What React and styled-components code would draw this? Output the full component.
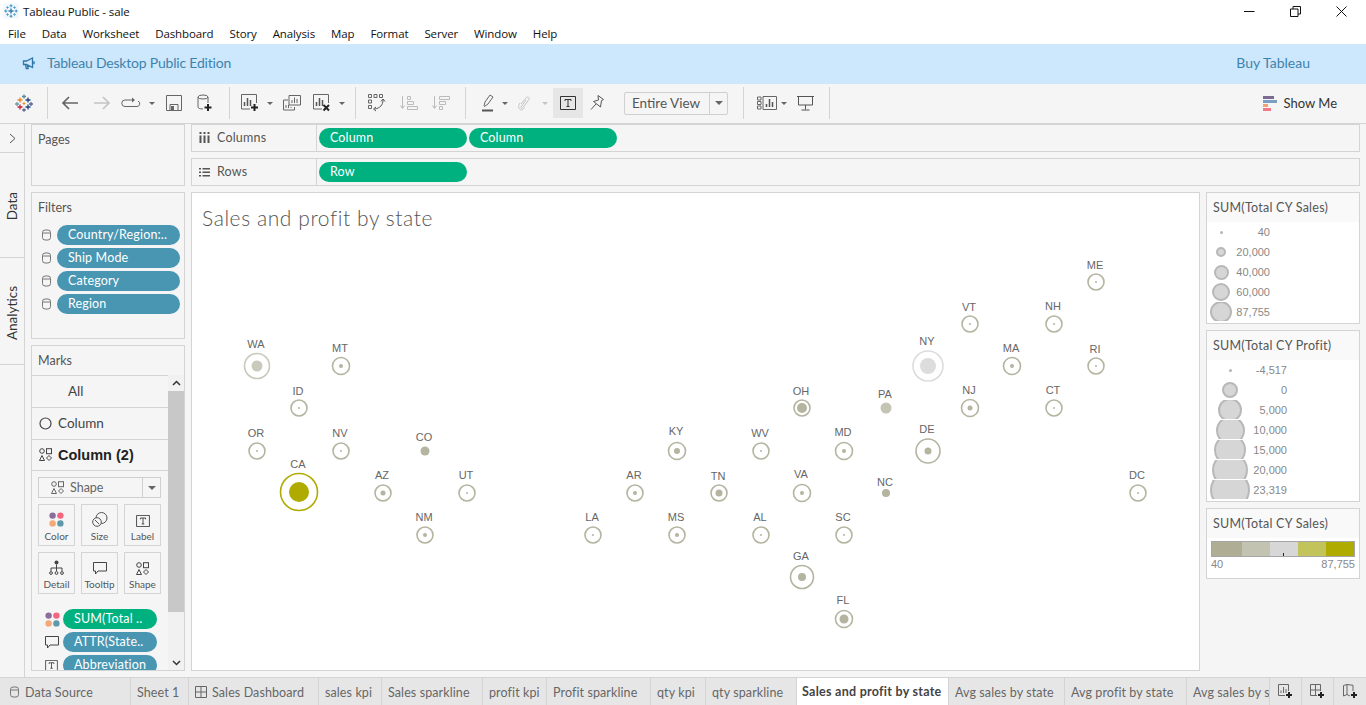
import React from 'react'
import styled, { createGlobalStyle } from 'styled-components'

const GlobalStyle = createGlobalStyle`
  html, body {
    margin: 0;
    padding: 0;
    background: #f5f5f5;
    overflow: hidden;
  }
  * { box-sizing: border-box; }
  svg { flex-shrink: 0; display: block; }
`

const UI = `"Open Sans", "Noto Sans", sans-serif`
const BOOK = `Lato, "Open Sans", sans-serif`
const ARIAL = `"Liberation Sans", Arial, sans-serif`

const Page = styled.div`
  width: 1366px;
  height: 705px;
  display: flex;
  flex-direction: column;
  overflow: hidden;
  font-family: ${BOOK};
  color: #333;
`

const TitleBar = styled.div`
  height: 22px;
  background: #fff;
  display: flex;
  align-items: center;
  padding-left: 3px;
  font: 11.500px ${UI};
  letter-spacing: -0.1px;
  color: #111;
`
const TitleText = styled.span`
  margin-left: 4px;
`
const WindowBtns = styled.div`
  margin-left: auto;
  display: flex;
  align-items: center;
  margin-right: 2px;
`
const WindowBtn = styled.div`
  width: 46px;
  height: 22px;
  display: flex;
  align-items: center;
  justify-content: center;
`
const MenuBar = styled.div`
  height: 22px;
  background: #fff;
  display: flex;
  align-items: center;
  padding-left: 8px;
  gap: 16px;
  font: 11.500px ${UI};
  letter-spacing: -0.12px;
  color: #111;
`
const Banner = styled.div`
  height: 40px;
  background: #cde7fd;
  display: flex;
  align-items: center;
  padding: 0 56px 3px 22px;
  color: #3d83ac;
  font-size: 14px;
`
const BannerText = styled.span`
  margin-left: 11px;
  letter-spacing: -0.2px;
`
const BuyLink = styled.span`
  margin-left: auto;
`

const Toolbar = styled.div`
  height: 40px;
  background: #f5f5f5;
  border-bottom: 1px solid #d4d4d4;
  display: flex;
  align-items: stretch;
`
const ToolGroup = styled.div`
  width: ${p => p.$w}px;
  padding-left: ${p => p.$pad || 0}px;
  margin: 3px 0 4px;
  border-right: 1px solid #d4d4d4;
  display: flex;
  align-items: center;
  flex-shrink: 0;
`
const Tool = styled.div`
  width: ${p => p.$w}px;
  height: 30px;
  flex-shrink: 0;
  display: flex;
  align-items: center;
  justify-content: center;
  margin-left: ${p => p.$ml || 0}px;
  background: ${p => (p.$on ? '#e6e6e6' : 'transparent')};
`
const Caret = styled.span`
  width: 0;
  height: 0;
  border-left: 3px solid transparent;
  border-right: 3px solid transparent;
  border-top: 3px solid ${p => p.$color || '#666'};
`
const FitSelect = styled.div`
  width: 104px;
  height: 23px;
  margin-left: 13px;
  border: 1px solid #cfcfcf;
  border-radius: 2px;
  display: flex;
  align-items: center;
  font: 13.500px ${BOOK};
  color: #555;
  padding-left: 7px;
`
const SelectArrow = styled.div`
  margin-left: auto;
  width: 18px;
  height: 100%;
  border-left: 1px solid #cfcfcf;
  display: flex;
  align-items: center;
  justify-content: center;
  ${Caret} {
    border-left-width: 4px;
    border-right-width: 4px;
    border-top-width: 4px;
  }
`
const ShowMe = styled.div`
  margin-left: auto;
  padding: 0 29px 1px 0;
  display: flex;
  align-items: center;
  gap: 6px;
  font: 13px ${BOOK};
  color: #333;
`

const Main = styled.div`
  height: 553px;
  display: flex;
`
const Rail = styled.div`
  width: 25px;
  border-right: 1px solid #d4d4d4;
  display: flex;
  flex-direction: column;
  flex-shrink: 0;
`
const RailChevron = styled.div`
  height: 29px;
  border-bottom: 1px solid #d4d4d4;
  display: flex;
  align-items: center;
  justify-content: center;
`
const RailTab = styled.div`
  height: ${p => p.$h}px;
  border-bottom: 1px solid #d4d4d4;
  display: flex;
  justify-content: center;
  align-items: flex-start;
  padding-top: ${p => p.$top}px;
  span {
    writing-mode: vertical-rl;
    transform: rotate(180deg);
    font: 13.500px ${BOOK};
    color: #333;
  }
`
const SideColumn = styled.div`
  width: 154px;
  margin-left: 6px;
  display: flex;
  flex-direction: column;
  gap: 6px;
  flex-shrink: 0;
`
const Card = styled.div`
  height: ${p => p.$h}px;
  border: 1px solid #d4d4d4;
  flex-shrink: 0;
  overflow: hidden;
  position: relative;
`
const CardTitle = styled.div`
  font: 12.500px ${BOOK};
  color: #555;
  padding: 7px 6px 0;
  height: 29px;
`
const FilterList = styled.div`
  display: flex;
  flex-direction: column;
  gap: 3px;
  padding: 3px 4px 0 10px;
`
const FilterRow = styled.div`
  display: flex;
  align-items: center;
  gap: 6px;
`
const Pill = styled.div`
  height: 20px;
  width: ${p => p.$w}px;
  border-radius: 10px;
  background: ${p => (p.$green ? '#00b180' : '#4996b2')};
  color: #fff;
  font: 12.500px/20px ${BOOK};
  letter-spacing: 0.15px;
  padding-left: ${p => p.$pad || 11}px;
  white-space: nowrap;
  overflow: hidden;
  flex-shrink: 0;
`
const MarksBody = styled.div`
  display: flex;
  height: 296px;
`
const MarksScroll = styled.div`
  width: 136px;
  overflow: hidden;
`
const MarkRow = styled.div`
  height: 32px;
  border-top: 1px solid #d4d4d4;
  display: flex;
  align-items: center;
  gap: 6px;
  padding: 0 0 1px ${p => p.$pad || 7}px;
  font: 13.500px ${BOOK};
  color: #444;
`
const MarkRowBold = styled(MarkRow)`
  font: 700 14.500px ${ARIAL};
  color: #222;
  border-bottom: 1px solid #d4d4d4;
`
const MarkTypeSelect = styled.div`
  width: 123px;
  height: 21px;
  margin: 6px 0 0 6px;
  border: 1px solid #cfcfcf;
  display: flex;
  align-items: center;
  padding-left: 12px;
  gap: 6px;
  font: 12.500px ${BOOK};
  color: #666;
`
const MarkButtons = styled.div`
  display: grid;
  grid-template-columns: repeat(3, 37px);
  grid-auto-rows: 42px;
  gap: 6px;
  margin: 6px 0 0 6px;
`
const MarkButton = styled.div`
  border: 1px solid #d4d4d4;
  display: flex;
  flex-direction: column;
  align-items: center;
  justify-content: flex-end;
  padding-bottom: 2px;
  font: 10px/13px ${BOOK};
  color: #555;
  svg { margin-bottom: 3px; }
`
const MarkPills = styled.div`
  display: flex;
  flex-direction: column;
  gap: 3px;
  margin: 15px 0 0 13px;
`
const MarkPillRow = styled.div`
  display: flex;
  align-items: center;
  gap: 3px;
`
const MarkPillIcon = styled.div`
  width: 15px;
  display: flex;
  justify-content: flex-start;
`
const Scrollbar = styled.div`
  width: 16px;
  display: flex;
  flex-direction: column;
  align-items: center;
  background: #f1f1f1;
`
const ScrollArrow = styled.div`
  height: 16px;
  width: 100%;
  display: flex;
  align-items: center;
  justify-content: center;
`
const ScrollThumb = styled.div`
  width: 100%;
  height: 221px;
  background: #c8c8c8;
`
const ScrollGap = styled.div`
  flex: 1;
`

const Centre = styled.div`
  width: 1169px;
  margin-left: 6px;
  display: flex;
  flex-direction: column;
  gap: 6px;
  flex-shrink: 0;
`
const Shelf = styled.div`
  height: 28px;
  border: 1px solid #d4d4d4;
  display: flex;
  align-items: center;
  flex-shrink: 0;
`
const ShelfLabel = styled.div`
  width: 125px;
  height: 100%;
  padding: 0 0 1px 7px;
  border-right: 1px solid #d4d4d4;
  display: flex;
  align-items: center;
  gap: 7px;
  font: 12.500px ${BOOK};
  letter-spacing: 0.2px;
  color: #555;
`
const ShelfPills = styled.div`
  display: flex;
  gap: 2px;
  padding-left: 2px;
`
const ViewRow = styled.div`
  display: flex;
  gap: 6px;
`
const View = styled.div`
  width: 1009px;
  height: 479px;
  background: #fff;
  border: 1px solid #d4d4d4;
  position: relative;
`
const ViewTitle = styled.div`
  font: 300 21px ${BOOK};
  color: #555;
  padding: 12px 0 0 10px;
  letter-spacing: 0.58px;
`
const MapChart = styled.svg`
  position: absolute;
  left: 0;
  top: 0;
  width: 1007px;
  height: 477px;
  text {
    font: 11px ${ARIAL};
    fill: #666;
    text-anchor: middle;
  }
`
const Legends = styled.div`
  width: 154px;
  display: flex;
  flex-direction: column;
  gap: 6px;
`
const Legend = styled.div`
  border: 1px solid #d4d4d4;
  background: #fff;
  padding-bottom: 1px;
`
const LegendTitle = styled.div`
  height: 29px;
  background: #f9f9f9;
  padding: 7px 6px 0;
  font: 12.500px ${BOOK};
  letter-spacing: 0.25px;
  color: #555;
  white-space: nowrap;
`
const LegendRow = styled.div`
  height: 20px;
  display: flex;
  align-items: center;
  position: relative;
  overflow: hidden;
  font: 11px ${ARIAL};
  color: #888;
`
const LegendClip = styled.div`
  position: absolute;
  left: 0;
  top: 0;
  width: 60px;
  height: 19px;
  overflow: hidden;
`
const LegendDot = styled.div`
  position: absolute;
  left: ${p => p.$cx - p.$r}px;
  top: ${p => 10 - p.$r}px;
  width: ${p => p.$r * 2}px;
  height: ${p => p.$r * 2}px;
  border-radius: 50%;
  background: ${p => (p.$r > 2 ? '#d6d6d6' : '#b5b5b5')};
  border: ${p => (p.$r > 2 ? '2px solid #b8b8b8' : '0')};
`
const LegendValue = styled.span`
  width: ${p => p.$right}px;
  text-align: right;
  position: relative;
`
const Ramp = styled.div`
  margin: 3px 4px 0;
  height: 16px;
  display: flex;
  border: 1px solid #a6a6a6;
  position: relative;
`
const RampStep = styled.div`
  width: ${p => p.$w}px;
  background: ${p => p.$c};
`
const RampTick = styled.div`
  position: absolute;
  left: 71px;
  bottom: 0;
  width: 1px;
  height: 3px;
  background: #222;
`
const RampLabels = styled.div`
  display: flex;
  justify-content: space-between;
  padding: 1px 4px 0;
  height: 20px;
  font: 11px ${ARIAL};
  color: #888;
`

const TabBar = styled.div`
  height: 28px;
  background: #e6e6e6;
  border-top: 1px solid #d4d4d4;
  display: flex;
  overflow: hidden;
`
const Tab = styled.div`
  width: ${p => p.$w}px;
  flex-shrink: 0;
  border-right: 1px solid #d4d4d4;
  display: flex;
  align-items: center;
  gap: ${p => p.$gap || 5}px;
  padding: ${p => (p.$active ? 0 : '1px')} 0 0 ${p => p.$pad || 6}px;
  font: ${p => (p.$active ? 700 : 400)} 12.500px ${BOOK};
  letter-spacing: ${p => (p.$active ? '0.27px' : '0.1px')};
  color: ${p => (p.$active ? '#444' : '#666')};
  background: ${p => (p.$active ? '#fff' : 'transparent')};
  white-space: nowrap;
  overflow: hidden;
`
const TabAction = styled.div`
  width: 32px;
  flex-shrink: 0;
  border-right: 1px solid #d4d4d4;
  display: flex;
  align-items: center;
  justify-content: center;
  &:last-child { border-right: 0; }
`

/* ---- icons ---- */
const Ic = ({ w = 20, h = 20, children, vb }) => (
  <svg width={w} height={h} viewBox={vb || `0 0 ${w} ${h}`} fill="none">{children}</svg>
)

const Cross = ({ x, y, s, c, sw = 1.4 }) => (
  <path d={`M${x - s} ${y}H${x + s}M${x} ${y - s}V${y + s}`} stroke={c} strokeWidth={sw} />
)

const TableauLogo = () => (
  <Ic w={18} h={18}>
    <Cross x={9} y={2.500} s={2} c="#5b879b" sw={1.300} />
    <Cross x={5} y={6} s={2.500} c="#e8862c" sw={1.300} />
    <Cross x={13} y={6} s={2.500} c="#1f447f" sw={1.300} />
    <Cross x={2} y={10} s={2} c="#7099a6" sw={1.300} />
    <Cross x={9} y={9.500} s={1.500} c="#eb912b" sw={1} />
    <Cross x={16} y={10} s={2} c="#5c6692" sw={1.300} />
    <Cross x={5} y={13} s={2.500} c="#c72035" sw={1.300} />
    <Cross x={13} y={13} s={2.500} c="#1f447f" sw={1.300} />
    <Cross x={9} y={16} s={1.800} c="#5b6591" sw={1.300} />
  </Ic>
)
const AppIcon = () => (
  <Ic w={16} h={16}>
    <rect x="0.5" y="0.5" width="15" height="15" fill="#f2f7fb" />
    <Cross x={8} y={8} s={2.500} c="#2f7fb5" sw={1.400} />
    <Cross x={8} y={2.800} s={1.500} c="#3d8dbf" sw={1} />
    <Cross x={8} y={13.200} s={1.500} c="#3d8dbf" sw={1} />
    <Cross x={2.800} y={8} s={1.500} c="#3d8dbf" sw={1} />
    <Cross x={13.200} y={8} s={1.500} c="#3d8dbf" sw={1} />
    <Cross x={4.500} y={4.500} s={1.300} c="#5aa3cc" sw={1} />
    <Cross x={11.500} y={4.500} s={1.300} c="#5aa3cc" sw={1} />
    <Cross x={4.500} y={11.500} s={1.300} c="#5aa3cc" sw={1} />
    <Cross x={11.500} y={11.500} s={1.300} c="#5aa3cc" sw={1} />
  </Ic>
)
const Megaphone = () => (
  <Ic w={14} h={14}>
    <path d="M1.500 5h3l6-3v9.500l-6-3h-3zM3.500 8.500l.8 4h1.800l-.7-3.600M12 5.200v3" stroke="#2c76a8" strokeWidth="1.300" />
  </Ic>
)
const Back = () => (
  <Ic w={18} h={14}>
    <path d="M17 7H2M8 1L2 7l6 6" stroke="#666" strokeWidth="1.700" />
  </Ic>
)
const Forward = () => (
  <Ic w={18} h={14}>
    <path d="M1 7h15M10 1l6 6-6 6" stroke="#c4c4c4" strokeWidth="1.700" />
  </Ic>
)
const Cycle = () => (
  <Ic w={20} h={12}>
    <path d="M11 3H4a2.800 2.800 0 0 0 0 6.500h12a2.800 2.800 0 0 0 1-5.400" stroke="#666" strokeWidth="1" />
    <path d="M11 .5l3 2.500-3 2.500z" fill="#666" />
  </Ic>
)
const Save = () => (
  <Ic w={16} h={16}>
    <path d="M.5.500h15v15H.5z" stroke="#666" />
    <path d="M4 15V9.500h8V15" stroke="#666" />
    <rect x="5" y="11" width="3" height="4" fill="#666" />
  </Ic>
)
const Plus = ({ x, y, s = 3.500 }) => (
  <path d={`M${x - s} ${y}H${x + s}M${x} ${y - s}V${y + s}`} stroke="#222" strokeWidth="2" />
)
const NewData = () => (
  <Ic w={16} h={18}>
    <ellipse cx="6" cy="3" rx="5" ry="2" stroke="#666" />
    <path d="M1 3v10c0 1 1.500 2 5 2M11 3v6" stroke="#666" />
    <Plus x={11} y={13.500} />
  </Ic>
)
const NewSheet = () => (
  <Ic w={18} h={18}>
    <path d="M9 15H.5V.500h15V9" stroke="#666" />
    <path d="M3.500 12V8M6.500 12V4M9.500 12V6" stroke="#555" strokeWidth="1.500" />
    <Plus x={13.500} y={13.500} />
  </Ic>
)
const DupSheet = () => (
  <Ic w={18} h={16}>
    <path d="M6 .500h11.500V10H6z" stroke="#666" fill="#f5f5f5" />
    <path d="M9 8V5M11.500 8V2.500M14 8V4" stroke="#666" />
    <path d="M.5 5H5M.5 5v10h11v-3" stroke="#666" />
    <path d="M3 13v-3M5.500 13V10M8 13v-1" stroke="#666" />
  </Ic>
)
const ClearSheet = () => (
  <Ic w={18} h={18}>
    <path d="M9 15H.5V.500h15V9" stroke="#666" />
    <path d="M3.500 12V8M6.500 12V4M9.500 12V6" stroke="#555" strokeWidth="1.500" />
    <path d="M10.500 11l5.500 5.500M16 11l-5.500 5.500" stroke="#222" strokeWidth="2" />
  </Ic>
)
const Swap = () => (
  <Ic w={18} h={18}>
    <path d="M.5.500h3v3h-3zM6 .500h3v3H6zM11.500.500h3v3h-3zM.5 6h3v3h-3zM.5 11.500h3v3h-3z" stroke="#666" />
    <path d="M15 6c0 5-3 8-8 9" stroke="#555" />
    <path d="M13 7.500l2-2.500 2 2.500M8 13l-2.500 2 2.500 2" stroke="#555" />
  </Ic>
)
const SortAsc = () => (
  <Ic w={18} h={16}>
    <path d="M2.500 1v12M.5 10.500l2 3 2-3" stroke="#bbb" />
    <path d="M7.500 1.500h3v3h-3zM7.500 6.500h6v3h-6zM7.500 11.500h10v3h-10z" stroke="#bbb" />
  </Ic>
)
const SortDesc = () => (
  <Ic w={18} h={16}>
    <path d="M2.500 1v12M.5 10.500l2 3 2-3" stroke="#bbb" />
    <path d="M7.500 1.500h10v3h-10zM7.500 6.500h6v3h-6zM7.500 11.500h3v3h-3z" stroke="#bbb" />
  </Ic>
)
const Highlight = () => (
  <Ic w={14} h={18}>
    <path d="M3 12l1-4 5-7 3 2-5 7-3.500 2.500z" stroke="#666" />
    <path d="M1 16.500h11" stroke="#555" strokeWidth="2" />
  </Ic>
)
const Clip = () => (
  <Ic w={14} h={17}>
    <path d="M3 9l5-6c1.500-2 4-.5 3 1.500L5 12.500c-1 1.500-2.500.5-2-.5l5-7M2 8c-2.500 3-1 7 1.500 7 1 0 2-1 3-2.500" stroke="#c4c4c4" />
  </Ic>
)
const TBox = ({ s = 16, c = '#333' }) => (
  <Ic w={s} h={s - 2} vb="0 0 16 14">
    <path d="M.5.500h15v13H.5z" stroke={c} />
    <path d="M5 5V3.500h6V5M8 3.500v7M6.500 10.500h3" stroke={c} />
  </Ic>
)
const Pin = () => (
  <Ic w={14} h={16}>
    <path d="M8 .500l5.500 4-2 1L10.500 12 3.500 6.500l5-1.500zM6 9l-5 5.500" stroke="#555" />
  </Ic>
)
const ViewData = () => (
  <Ic w={20} h={14}>
    <path d="M.5 1h3.500v3H.5zM.5 5.500h3.500v3H.5zM.5 10h3.500v3H.5zM6 .500h13.500v13H6z" stroke="#666" />
    <path d="M9.500 11V8M12.500 11V3M15.500 11V6" stroke="#555" strokeWidth="1.500" />
  </Ic>
)
const Present = () => (
  <Ic w={18} h={16}>
    <path d="M0 1.500h17M1.500 1.500V10h14V1.500M8.500 10v4.500M4.500 15h8" stroke="#555" />
  </Ic>
)
const ShowMeIcon = () => (
  <Ic w={15} h={15}>
    <rect x="0" y="0" width="11" height="3" fill="#7d6a92" />
    <rect x="0" y="4" width="14" height="3" fill="#7a9fc4" />
    <rect x="0" y="8" width="5" height="3" fill="#f3a36f" />
    <rect x="0" y="12" width="8" height="3" fill="#f27a86" />
  </Ic>
)
const Chevron = () => (
  <Ic w={7} h={11}>
    <path d="M1 1l5 4.500-5 4.500" stroke="#555" />
  </Ic>
)
const Bars = () => (
  <Ic w={11} h={11}>
    <path d="M1.500 0v2M1.500 3.500V11M5.500 0v2M5.500 3.500V11M9.500 0v2M9.500 3.500V11" stroke="#555" strokeWidth="2" />
  </Ic>
)
const Lines = () => (
  <Ic w={11} h={10}>
    <path d="M0 1h2v1.500H0zM0 4.500h2V6H0zM0 8h2v1.500H0z" fill="#555" />
    <path d="M3.500 1.700H11M3.500 5.200H11M3.500 8.700H11" stroke="#555" strokeWidth="1.500" />
  </Ic>
)
const Cylinder = () => (
  <Ic w={9} h={12}>
    <rect x="0.5" y="1" width="8" height="10" rx="2.500" stroke="#777" />
    <path d="M.5 4h8" stroke="#777" />
  </Ic>
)
const CircleMark = () => (
  <Ic w={13} h={13}>
    <circle cx="6.500" cy="6.500" r="5.500" stroke="#444" strokeWidth="1.200" />
  </Ic>
)
const ShapeMark = ({ c = '#444' }) => (
  <Ic w={13} h={13}>
    <circle cx="3" cy="3" r="2.300" stroke={c} />
    <rect x="7.500" y=".7" width="5" height="5" stroke={c} />
    <path d="M3 7.500l2.500 5H.5z" stroke={c} />
    <path d="M10 7.500l2.500 2.500-2.500 2.500-2.500-2.500z" stroke={c} />
  </Ic>
)
const ColorDots = () => (
  <Ic w={15} h={15}>
    <circle cx="3.600" cy="3.600" r="3.200" fill="#8a6f9c" />
    <circle cx="11.400" cy="3.600" r="3.200" fill="#f2677f" />
    <circle cx="3.600" cy="11.400" r="3.200" fill="#f3a877" />
    <circle cx="11.400" cy="11.400" r="3.200" fill="#5f98a8" />
  </Ic>
)
const SizeIcon = () => (
  <Ic w={16} h={15}>
    <circle cx="9.500" cy="6" r="5.500" stroke="#555" fill="#f5f5f5" />
    <circle cx="5" cy="10" r="4.300" stroke="#555" fill="#f5f5f5" />
    <path d="M3 8l4 4" stroke="#555" />
  </Ic>
)
const DetailIcon = () => (
  <Ic w={15} h={15}>
    <circle cx="7.500" cy="2.500" r="2" fill="#444" />
    <path d="M7.500 4.500v5M2 11V8h11v3M7.500 9v2" stroke="#444" />
    <circle cx="2" cy="13" r="1.400" stroke="#444" />
    <circle cx="7.500" cy="13" r="1.400" stroke="#444" />
    <circle cx="13" cy="13" r="1.400" stroke="#444" />
  </Ic>
)
const TooltipIcon = () => (
  <Ic w={14} h={13}>
    <path d="M.5.500h13v8.500H5l-2.500 3V9H.5z" stroke="#444" />
  </Ic>
)
const SheetTabIcon = () => (
  <Ic w={12} h={12}>
    <path d="M.5.500h11v11H.5zM6 .500v11M.5 6h11" stroke="#666" />
  </Ic>
)
const AddSheet = () => (
  <Ic w={15} h={15}>
    <path d="M7 11.500H.5V.500h10V7" stroke="#666" />
    <path d="M3 9V6.500M5.500 9V3M8 9V5" stroke="#666" />
    <Plus x={11} y={11} s={3} />
  </Ic>
)
const AddDash = () => (
  <Ic w={15} h={15}>
    <path d="M7 11.500H.5V.500h10V7M5.500.500v11M.5 6h10" stroke="#666" />
    <Plus x={11} y={11} s={3} />
  </Ic>
)
const AddStory = () => (
  <Ic w={15} h={15}>
    <path d="M7 12l-3 -1.500L.5 12V1.500L4 .500l6 .8V7M4 .500v10" stroke="#666" />
    <Plus x={11} y={11} s={3} />
  </Ic>
)

/* ---- data ---- */
const STATES = [
  ['ME', 904, 89, 8, 1, 72],
  ['VT', 778, 131, 8, 1, 114],
  ['NH', 862, 131, 8, 1, 113],
  ['WA', 65, 173, 12.500, 5.500, 151, '#c9c9bc', '#c9c9bc'],
  ['MT', 149, 173, 8.500, 2, 155],
  ['NY', 736, 173, 15, 8, 148, '#dcdcdc', '#dcdcdc'],
  ['MA', 820, 173, 8.500, 2, 155],
  ['RI', 904, 173, 8, 1, 156],
  ['ID', 107, 215, 8, 1, 198],
  ['OH', 610, 215, 8, 5, 198],
  ['PA', 694, 215, 0, 5.500, 201, '#c5c5b3', '#c5c5b3'],
  ['NJ', 778, 215, 8.500, 2.500, 197],
  ['CT', 862, 215, 8, 1, 197],
  ['OR', 65, 258, 8, 1, 240],
  ['NV', 149, 258, 8, 1, 240],
  ['CO', 233, 258, 0, 4.500, 244],
  ['KY', 485, 258, 8.500, 3, 238],
  ['WV', 569, 258, 8, 1, 240],
  ['MD', 652, 258, 8.500, 2, 239],
  ['DE', 736, 258, 12, 3.500, 236],
  ['CA', 107, 299, 18.500, 10, 271, '#b0ab00', '#b0ab00'],
  ['AZ', 191, 300, 8, 2.500, 282],
  ['UT', 275, 300, 8, 1, 282],
  ['AR', 443, 300, 8, 2, 282],
  ['TN', 527, 300, 8, 3.500, 283],
  ['VA', 610, 300, 8.500, 2, 281],
  ['NC', 694, 300, 0, 4, 289],
  ['DC', 946, 300, 8, 1, 282],
  ['NM', 233, 342, 8, 2, 324],
  ['LA', 401, 342, 8, 1, 324],
  ['MS', 485, 342, 8, 2, 324],
  ['AL', 569, 342, 8, 1, 324],
  ['SC', 652, 342, 8, 1, 324],
  ['GA', 610, 384, 11.500, 4, 363],
  ['FL', 652, 426, 8.500, 4.500, 407],
]

const MENU = ['File', 'Data', 'Worksheet', 'Dashboard', 'Story', 'Analysis', 'Map', 'Format', 'Server', 'Window', 'Help']
const FILTERS = ['Country/Region:..', 'Ship Mode', 'Category', 'Region']
const SALES = [[1.500, '40'], [5, '20,000'], [7.500, '40,000'], [9, '60,000'], [11, '87,755']]
const PROFIT = [[1.500, '-4,517'], [8, '0'], [12, '5,000'], [14.500, '10,000'], [16, '15,000'], [18, '20,000'], [20, '23,319']]
const RAMP = [[30, '#afae95'], [28, '#c3c3b2'], [28, '#d7d7d7'], [28, '#c3c35c'], [28, '#b0ab00']]
const TABS = [
  ['Sheet 1', 58],
  ['Sales Dashboard', 130, true],
  ['sales kpi', 63],
  ['Sales sparkline', 101],
  ['profit kpi', 64],
  ['Profit sparkline', 104],
  ['qty kpi', 55],
  ['qty sparkline', 91],
]
const TABS_AFTER = [
  ['Avg sales by state', 116],
  ['Avg profit by state', 122],
  ['Avg sales by state', 83],
]

export default function App() {
  return (
    <Page>
      <GlobalStyle />
      <TitleBar>
        <AppIcon />
        <TitleText>Tableau Public - sale</TitleText>
        <WindowBtns>
          <WindowBtn>
            <Ic w={11} h={11}><path d="M0 5.500h10.500" stroke="#111" /></Ic>
          </WindowBtn>
          <WindowBtn>
            <Ic w={11} h={11}><path d="M.5 3h7.500v7.500H.5zM3 3V.500h7.500V8H8" stroke="#111" /></Ic>
          </WindowBtn>
          <WindowBtn>
            <Ic w={11} h={11}><path d="M.5.500l10 10M10.500.500l-10 10" stroke="#111" /></Ic>
          </WindowBtn>
        </WindowBtns>
      </TitleBar>
      <MenuBar>
        {MENU.map(m => <span key={m}>{m}</span>)}
      </MenuBar>
      <Banner>
        <Megaphone />
        <BannerText>Tableau Desktop Public Edition</BannerText>
        <BuyLink>Buy Tableau</BuyLink>
      </Banner>
      <Toolbar>
        <ToolGroup $w={48} $pad={9}><Tool $w={30}><TableauLogo /></Tool></ToolGroup>
        <ToolGroup $w={182} $pad={6}>
          <Tool $w={32}><Back /></Tool>
          <Tool $w={32}><Forward /></Tool>
          <Tool $w={26}><Cycle /></Tool>
          <Tool $w={16}><Caret /></Tool>
          <Tool $w={28}><Save /></Tool>
          <Tool $w={34}><NewData /></Tool>
        </ToolGroup>
        <ToolGroup $w={126} $pad={5}>
          <Tool $w={30}><NewSheet /></Tool>
          <Tool $w={10}><Caret /></Tool>
          <Tool $w={34}><DupSheet /></Tool>
          <Tool $w={26}><ClearSheet /></Tool>
          <Tool $w={14}><Caret /></Tool>
        </ToolGroup>
        <ToolGroup $w={110} $pad={5}>
          <Tool $w={32}><Swap /></Tool>
          <Tool $w={32}><SortAsc /></Tool>
          <Tool $w={32}><SortDesc /></Tool>
        </ToolGroup>
        <ToolGroup $w={278} $pad={9}>
          <Tool $w={26}><Highlight /></Tool>
          <Tool $w={8}><Caret /></Tool>
          <Tool $w={32}><Clip /></Tool>
          <Tool $w={8}><Caret $color="#c4c4c4" /></Tool>
          <Tool $w={30} $ml={4} $on><TBox /></Tool>
          <Tool $w={28}><Pin /></Tool>
          <FitSelect>
            Entire View
            <SelectArrow><Caret /></SelectArrow>
          </FitSelect>
        </ToolGroup>
        <ToolGroup $w={86} $pad={10}>
          <Tool $w={26}><ViewData /></Tool>
          <Tool $w={8}><Caret /></Tool>
          <Tool $w={36}><Present /></Tool>
        </ToolGroup>
        <ShowMe><ShowMeIcon />Show Me</ShowMe>
      </Toolbar>
      <Main>
        <Rail>
          <RailChevron><Chevron /></RailChevron>
          <RailTab $h={105} $top={39}><span>Data</span></RailTab>
          <RailTab $h={107} $top={28}><span>Analytics</span></RailTab>
        </Rail>
        <SideColumn>
          <Card $h={62}><CardTitle>Pages</CardTitle></Card>
          <Card $h={147}>
            <CardTitle>Filters</CardTitle>
            <FilterList>
              {FILTERS.map(f => (
                <FilterRow key={f}><Cylinder /><Pill $w={123}>{f}</Pill></FilterRow>
              ))}
            </FilterList>
          </Card>
          <Card $h={326}>
            <CardTitle>Marks</CardTitle>
            <MarksBody>
              <MarksScroll>
                <MarkRow $pad={36}>All</MarkRow>
                <MarkRow><CircleMark />Column</MarkRow>
                <MarkRowBold><ShapeMark />Column (2)</MarkRowBold>
                <MarkTypeSelect>
                  <ShapeMark c="#666" />
                  Shape
                  <SelectArrow><Caret /></SelectArrow>
                </MarkTypeSelect>
                <MarkButtons>
                  <MarkButton><ColorDots />Color</MarkButton>
                  <MarkButton><SizeIcon />Size</MarkButton>
                  <MarkButton><TBox s={14} />Label</MarkButton>
                  <MarkButton><DetailIcon />Detail</MarkButton>
                  <MarkButton><TooltipIcon />Tooltip</MarkButton>
                  <MarkButton><ShapeMark />Shape</MarkButton>
                </MarkButtons>
                <MarkPills>
                  <MarkPillRow><MarkPillIcon><ColorDots /></MarkPillIcon><Pill $w={94} $green>SUM(Total ..</Pill></MarkPillRow>
                  <MarkPillRow><MarkPillIcon><TooltipIcon /></MarkPillIcon><Pill $w={94}>ATTR(State..</Pill></MarkPillRow>
                  <MarkPillRow><MarkPillIcon><TBox s={13} /></MarkPillIcon><Pill $w={94}>Abbreviation</Pill></MarkPillRow>
                </MarkPills>
              </MarksScroll>
              <Scrollbar>
                <ScrollArrow>
                  <Ic w={9} h={6}><path d="M1 5l3.500-3.500L8 5" stroke="#333" strokeWidth="1.500" /></Ic>
                </ScrollArrow>
                <ScrollThumb />
                <ScrollGap />
                <ScrollArrow>
                  <Ic w={9} h={6}><path d="M1 1l3.500 3.500L8 1" stroke="#333" strokeWidth="1.500" /></Ic>
                </ScrollArrow>
              </Scrollbar>
            </MarksBody>
          </Card>
        </SideColumn>
        <Centre>
          <Shelf>
            <ShelfLabel><Bars />Columns</ShelfLabel>
            <ShelfPills>
              <Pill $w={148} $green>Column</Pill>
              <Pill $w={148} $green>Column</Pill>
            </ShelfPills>
          </Shelf>
          <Shelf>
            <ShelfLabel><Lines />Rows</ShelfLabel>
            <ShelfPills><Pill $w={148} $green>Row</Pill></ShelfPills>
          </Shelf>
          <ViewRow>
            <View>
              <ViewTitle>Sales and profit by state</ViewTitle>
              <MapChart viewBox="0 0 1007 477">
                {STATES.map(([name, x, y, ring, dot, ly, stroke = '#b4b4a0', fill = '#b4b4a0']) => (
                  <g key={name}>
                    <text x={x - 1} y={ly + 4}>{name}</text>
                    {ring > 0 && <circle cx={x} cy={y} r={ring} stroke={stroke} strokeWidth="1.600" fill="none" />}
                    <circle cx={x} cy={y} r={dot} fill={fill} />
                  </g>
                ))}
              </MapChart>
            </View>
            <Legends>
              <Legend>
                <LegendTitle>SUM(Total CY Sales)</LegendTitle>
                {SALES.map(([r, v]) => (
                  <LegendRow key={v}>
                    <LegendClip><LegendDot $cx={14} $r={r} /></LegendClip>
                    <LegendValue $right={63}>{v}</LegendValue>
                  </LegendRow>
                ))}
              </Legend>
              <Legend>
                <LegendTitle>SUM(Total CY Profit)</LegendTitle>
                {PROFIT.map(([r, v]) => (
                  <LegendRow key={v}>
                    <LegendClip><LegendDot $cx={23} $r={r} /></LegendClip>
                    <LegendValue $right={80}>{v}</LegendValue>
                  </LegendRow>
                ))}
              </Legend>
              <Legend>
                <LegendTitle>SUM(Total CY Sales)</LegendTitle>
                <Ramp>
                  {RAMP.map(([w, c]) => <RampStep key={c} $w={w} $c={c} />)}
                  <RampTick />
                </Ramp>
                <RampLabels><span>40</span><span>87,755</span></RampLabels>
              </Legend>
            </Legends>
          </ViewRow>
        </Centre>
      </Main>
      <TabBar>
        <Tab $w={131} $pad={10} $gap={6}><Cylinder />Data Source</Tab>
        {TABS.map(([name, w, dash]) => (
          <Tab key={name} $w={w}>{dash && <SheetTabIcon />}{name}</Tab>
        ))}
        <Tab $w={152} $pad={5} $active>Sales and profit by state</Tab>
        {TABS_AFTER.map(([name, w], i) => <Tab key={i} $w={w}>{name}</Tab>)}
        <TabAction><AddSheet /></TabAction>
        <TabAction><AddDash /></TabAction>
        <TabAction><AddStory /></TabAction>
      </TabBar>
    </Page>
  )
}
